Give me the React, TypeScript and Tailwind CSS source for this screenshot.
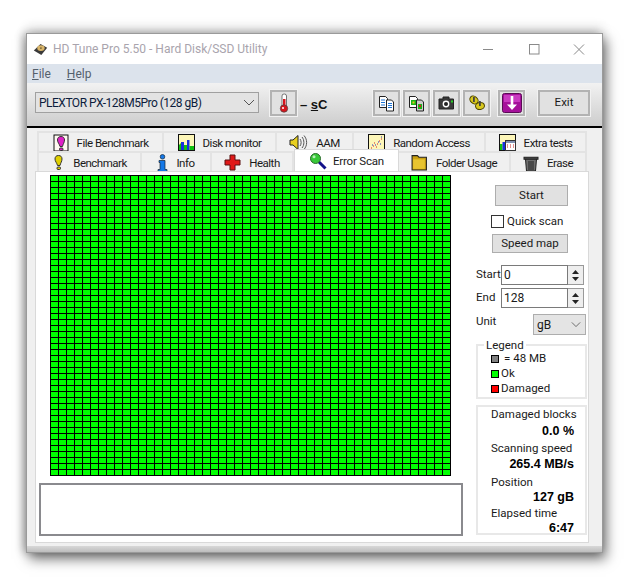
import type { ReactNode } from 'react';

const cells = Array.from({ length: 2500 });

const DiskIcon = () => (
  <svg width="15" height="13" viewBox="0 0 18 14" preserveAspectRatio="none" className="shrink-0">
    <path d="M1 8 9 1l8 4-7 8z" fill="#3a3a3a" />
    <ellipse cx="9.5" cy="5.5" rx="4.5" ry="3.2" fill="#d9b56a" />
    <circle cx="9.5" cy="5.5" r="1" fill="#6b5a30" />
  </svg>
);

const Thermometer = () => (
  <svg width="16" height="20" viewBox="0 0 16 20">
    <rect x="6" y="1" width="4.5" height="13" rx="2" fill="#fff" stroke="#555" strokeWidth="0.8" />
    <rect x="7" y="6" width="2.5" height="8" fill="#d8141c" />
    <circle cx="8" cy="15.5" r="3.7" fill="#d8141c" stroke="#444" strokeWidth="0.7" />
    <circle cx="7" cy="15" r="1" fill="#fff" />
  </svg>
);

const DocsIcon = ({ colored }: { colored?: boolean }) => (
  <svg width="17" height="17" viewBox="0 0 17 17">
    <path d="M1.5 1.5h6l2 2v9h-8z" fill="#fff" stroke="#222" />
    <path d="M8.5 5h5l2 2v9h-7z" fill={colored ? '#ccc' : '#fff'} stroke="#222" />
    {colored ? (
      <>
        <rect x="3" y="5" width="5" height="5" fill="#18b518" />
        <rect x="4.5" y="6.5" width="2" height="2" fill="#e8c81a" />
        <rect x="10" y="9" width="4" height="5" fill="#18b518" />
        <rect x="11" y="10" width="2" height="2" fill="#d81a1a" />
      </>
    ) : (
      <>
        <path d="M3 5h4M3 7.5h4M3 10h4" stroke="#1d74d6" />
        <path d="M10 8.5h4M10 10.5h4M10 12.5h4" stroke="#1d74d6" />
      </>
    )}
  </svg>
);

const CameraIcon = () => (
  <svg width="17" height="14" viewBox="0 0 17 14">
    <path d="M5 3V1h6v2h4.5v10H1V3z" fill="#3a3a3a" stroke="#222" />
    <circle cx="8" cy="8" r="3.4" fill="#fff" />
    <circle cx="8" cy="8" r="2" fill="#222" />
    <rect x="13" y="4.5" width="2" height="2" fill="#27d327" />
  </svg>
);

const CoinsIcon = () => (
  <svg width="18" height="18" viewBox="0 0 18 18">
    <ellipse cx="6" cy="6" rx="4.5" ry="3.5" transform="rotate(40 6 6)" fill="#d8c81e" stroke="#4a4200" />
    <ellipse cx="12" cy="12" rx="4.5" ry="3.5" transform="rotate(-10 12 12)" fill="#d8c81e" stroke="#4a4200" />
    <rect x="5" y="3" width="1.8" height="5" fill="#444" />
    <rect x="11" y="7" width="1.8" height="5" fill="#444" />
  </svg>
);

const DownIcon = () => (
  <svg width="20" height="20" viewBox="0 0 20 20">
    <rect x="0.5" y="0.5" width="19" height="19" rx="2" fill="#a5109a" stroke="#5a0a55" />
    <rect x="2" y="2" width="16" height="7" fill="#c93ac0" />
    <path d="M8.7 3h2.6v8.5H15L10 17l-5-5.500h3.700z" fill="#fff" />
  </svg>
);

const Bulb = ({ color, edge }: { color: string; edge: string }) => (
  <>
    <path d="M6.5 1.5c2.500 0 3.500 1.500 3.500 3.500 0 2.500-1.500 4-2 6.500H5.500C5 9 3 7.500 3 5c0-2 1-3.500 3.500-3.500z" fill={color} stroke={edge} />
    <rect x="5" y="13" width="3.5" height="2.5" rx="1" fill={color} stroke={edge} />
  </>
);

const tabIcons: Record<string, ReactNode> = {
  'File Benchmark': (
    <svg width="16" height="18" viewBox="0 0 16 18">
      <rect x="1" y="1" width="14" height="16" fill="#fff8f0" stroke="#111" />
      <g transform="translate(1.5 1)">
        <Bulb color="#e020c8" edge="#333" />
      </g>
    </svg>
  ),
  'Disk monitor': (
    <svg width="17" height="17" viewBox="0 0 17 17">
      <rect x="0.5" y="0.5" width="16" height="16" fill="#fdf6b8" stroke="#111" />
      <path d="M1 16v-5l2-2v7z" fill="#10c010" />
      <path d="M3 16V8h3v8z" fill="#1530e0" />
      <path d="M6 16v-5h3v5z" fill="#10c010" />
      <path d="M9 16V6h2.500v10z" fill="#1530e0" />
      <path d="M11.5 16v-4H16v4z" fill="#10c010" />
    </svg>
  ),
  AAM: (
    <svg width="19" height="17" viewBox="0 0 19 17">
      <path d="M1 6h3l5-4.500v14L4 11H1z" fill="#e8d020" stroke="#222" />
      <path d="M11 5c1.500 2 1.500 5 0 7M13 3c2.500 3 2.500 8 0 11M15 1.500c3.500 4 3.500 10 0 14" fill="none" stroke="#555" />
    </svg>
  ),
  'Random Access': (
    <svg width="17" height="17" viewBox="0 0 17 17">
      <rect x="0.5" y="0.5" width="16" height="16" fill="#fdf6b8" stroke="#111" />
      <path d="M3 14h1M5 12h1M8 13h1M6 9h1M9 10h1M11 7h1M13 5h1" stroke="#d02020" />
      <path d="M4 11h1M7 11h1M10 8h1M12 10h1M13 3h1" stroke="#2030c0" />
    </svg>
  ),
  'Extra tests': (
    <svg width="17" height="17" viewBox="0 0 17 17">
      <rect x="0.5" y="0.5" width="16" height="16" fill="#fdf6b8" stroke="#111" />
      <path d="M1 16v-6h2.500v6z" fill="#10c010" />
      <path d="M3.5 16V8H6v8z" fill="#1530e0" />
      <rect x="6.5" y="6.5" width="10" height="10" fill="#fff" stroke="#333" />
      <rect x="7" y="7" width="9" height="2" fill="#8090b0" />
      <path d="M8 11h1M11 11h1M14 11h1M8 13h1M11 13h1M14 13h1" stroke="#c02020" />
    </svg>
  ),
  Benchmark: (
    <svg width="13" height="17" viewBox="0 0 13 17">
      <Bulb color="#e0d000" edge="#333" />
    </svg>
  ),
  Info: (
    <svg width="11" height="18" viewBox="0 0 11 18">
      <circle cx="5.5" cy="2.8" r="2.3" fill="#1478e8" stroke="#123" strokeWidth="0.7" />
      <path d="M2 6.5h6v9h2v2H1v-2h2v-7H2z" fill="#1478e8" stroke="#123" strokeWidth="0.7" />
    </svg>
  ),
  Health: (
    <svg width="17" height="17" viewBox="0 0 17 17">
      <path d="M6 1h5v5h5v5h-5v5H6v-5H1V6h5z" fill="#e01818" stroke="#5a1010" />
    </svg>
  ),
  'Error Scan': (
    <svg width="18" height="18" viewBox="0 0 18 18">
      <path d="m10 10 6.5 6.500" stroke="#12128a" strokeWidth="3" />
      <circle cx="6.5" cy="6.5" r="5" fill="#38c838" stroke="#2a6a2a" />
      <circle cx="5" cy="4.8" r="1.5" fill="#b8f0b8" />
    </svg>
  ),
  'Folder Usage': (
    <svg width="17" height="17" viewBox="0 0 16 16">
      <path d="M1 3V1.5h5L7.5 3H14.500v12H1z" fill="#caa010" stroke="#222" />
      <path d="M2 5h11v9H2z" fill="#e8c430" />
    </svg>
  ),
  Erase: (
    <svg width="16" height="18" viewBox="0 0 16 17" preserveAspectRatio="none">
      <path d="M1 3h14v2H1z" fill="#555" stroke="#222" />
      <path d="M2.5 5h11l-1 11h-9z" fill="#6e6e6e" stroke="#222" />
      <path d="M6 6.5V15M8 6.5V15M10 6.5V15" stroke="#222" />
    </svg>
  ),
};

function Tab({ name, width, active }: { name: string; width: string; active?: boolean }) {
  return (
    <div
      className={
        active
          ? `${width} relative z-10 -mt-[2px] flex h-[22px] items-start justify-center gap-[6px] border border-b-0 border-[#d9d9d9] bg-white pt-[2px] text-[11.5px] tracking-[-0.2px]`
          : `${width} flex h-[20px] items-center justify-center gap-[8px] border-t-2 border-r-2 border-[#e3e3e3] pt-px text-[11.5px] tracking-[-0.5px] first:border-l-2`
      }
    >
      {tabIcons[name]}
      <span className="translate-y-px">{name}</span>
    </div>
  );
}

function ToolButton({ children, width = 'w-[27px]' }: { children: ReactNode; width?: string }) {
  return (
    <div className={`${width} flex h-[26px] items-center justify-center border-2 border-[#b3b3b3] bg-[#e1e1e1] outline outline-1 outline-[#f2f2f2]`}>
      {children}
    </div>
  );
}

function Spin({ value, label }: { value: string; label: string }) {
  return (
    <div className="flex items-center">
      <span className="w-[25px]">{label}</span>
      <div className="flex h-[20px] w-[67px] items-center border border-[#7a7a7a] bg-white px-[2px] text-[12px]">{value}</div>
      <div className="flex h-[20px] w-[16px] flex-col items-center justify-center gap-[3px] border border-l-0 border-[#999] bg-[#eee]">
        <svg width="7" height="4" viewBox="0 0 7 4"><path d="M3.5 0 7 4H0z" fill="#222" /></svg>
        <svg width="7" height="4" viewBox="0 0 7 4"><path d="M3.5 4 7 0H0z" fill="#222" /></svg>
      </div>
    </div>
  );
}

function Stat({ label, value, top, valueTop }: { label: string; value: string; top: string; valueTop: string }) {
  return (
    <div className={`flex flex-col ${top}`}>
      <span className="h-[15px] leading-[15px]">{label}</span>
      <span className={`h-[16px] pr-[11px] text-right font-['Liberation_Sans',sans-serif] text-[12.5px] leading-[16px] font-bold text-black ${valueTop}`}>{value}</span>
    </div>
  );
}

function Chevron({ size = 12 }: { size?: number }) {
  return (
    <svg width={size} height="7" viewBox="0 0 12 7" fill="none" stroke="#555">
      <path d="m1 1 5 5 5-5" />
    </svg>
  );
}

export default function App() {
  return (
    <div className="min-h-[579px] bg-white pt-[33px] pl-[26px] font-['Roboto',sans-serif] text-[11.5px] text-[#1a1a1a]">
      <div className="flex h-[520px] w-[577px] flex-col border border-[#9a9a9a] bg-[#f0f0f0] shadow-[3px_6px_12px_rgba(0,0,0,0.55),0_-6px_10px_rgba(0,0,0,0.12),-4px_0_8px_rgba(0,0,0,0.2)]">
        <div className="flex h-[30px] shrink-0 items-center bg-white pl-[6px]">
          <DiskIcon />
          <span className="ml-[5px] text-[12px] text-[#a9a4ad]">HD Tune Pro 5.50 - Hard Disk/SSD Utility</span>
          <div className="ml-auto flex items-center pr-[11px]">
            <svg width="120" height="14" viewBox="0 0 120 14" fill="none" stroke="#8a8a8a">
              <path d="M12 7.5h10" />
              <rect x="58.5" y="2.5" width="9.5" height="9.5" />
              <path d="m103 2.500 10 10m0-10-10 10" />
            </svg>
          </div>
        </div>
        <div className="flex h-[19px] shrink-0 items-center gap-[16px] bg-[#dce3ec] pl-[5px] text-[12px] text-[#55606c]">
          <span><span className="underline">F</span>ile</span>
          <span><span className="underline">H</span>elp</span>
        </div>
        <div className="flex h-[45px] shrink-0 items-start border-b-2 border-black bg-linear-to-b from-[#f2f2f2] to-[#cdcdcd] pt-[7px] pl-[8px]">
          <div className="mt-[2px] flex h-[21px] w-[224px] items-center justify-between border border-[#a0a0a0] bg-[#e3e3e3] px-[3px] text-[12px] tracking-[-0.5px] text-[#0c1c3c]">
            <span>PLEXTOR PX-128M5Pro (128 gB)</span>
            <Chevron />
          </div>
          <div className="ml-[11px]"><ToolButton><Thermometer /></ToolButton></div>
          <div className="ml-[3px] flex w-[73px] items-center pt-[5px] font-['Liberation_Sans',sans-serif] text-[13px] font-bold text-[#111]">
            <span>–&nbsp;</span><span className="underline">s</span><span>C</span>
          </div>
          <div className="flex gap-[3px]">
            <ToolButton><DocsIcon /></ToolButton>
            <ToolButton><DocsIcon colored /></ToolButton>
            <ToolButton><CameraIcon /></ToolButton>
            <ToolButton><CoinsIcon /></ToolButton>
          </div>
          <div className="ml-[8px]"><ToolButton><DownIcon /></ToolButton></div>
          <div className="ml-[13px]"><ToolButton width="w-[52px]">Exit</ToolButton></div>
        </div>
        <div className="flex min-h-0 flex-1 flex-col pt-[3px] pl-[8px]">
          <div className="flex pl-[2px]">
            <Tab name="File Benchmark" width="w-[127px]" />
            <Tab name="Disk monitor" width="w-[113px]" />
            <Tab name="AAM" width="w-[77px]" />
            <Tab name="Random Access" width="w-[132px]" />
            <Tab name="Extra tests" width="w-[101px]" />
          </div>
          <div className="flex pl-[2px]">
            <Tab name="Benchmark" width="w-[105px]" />
            <Tab name="Info" width="w-[70px]" />
            <Tab name="Health" width="w-[82px]" />
            <Tab name="Error Scan" width="w-[105px]" active />
            <Tab name="Folder Usage" width="w-[112px]" />
            <Tab name="Erase" width="w-[76px]" />
          </div>
          <div className="flex h-[372px] w-[554px] border border-[#d9d9d9] bg-white pt-[3px] pl-[3px]">
            <div className="flex w-[424px] flex-col">
              <div className="ml-[11px] grid h-[301px] w-[401px] grid-cols-[repeat(50,7px)] grid-rows-[repeat(50,5px)] gap-px bg-black p-px">
                {cells.map((_, i) => (
                  <div key={i} className="bg-[#00ff00]" />
                ))}
              </div>
              <div className="mt-[7px] h-[53px] w-[424px] border-2 border-[#8a8a8e] bg-white" />
            </div>
            <div className="ml-[13px] flex w-[111px] flex-col">
              <div className="mt-[10px] ml-[19px] flex h-[21px] w-[73px] items-center justify-center border border-[#adadad] bg-[#e1e1e1]">Start</div>
              <div className="mt-[9px] ml-[15px] flex h-[13px] items-center gap-[3px]">
                <div className="h-[13px] w-[13px] border border-[#333] bg-white" />
                <span>Quick scan</span>
              </div>
              <div className="mt-[6px] ml-[16px] flex h-[19px] w-[76px] items-center justify-center border border-[#adadad] bg-[#e1e1e1]">Speed map</div>
              <div className="mt-[12px] flex flex-col gap-[3px]">
                <Spin label="Start" value="0" />
                <Spin label="End" value="128" />
              </div>
              <div className="mt-[5px] flex items-center justify-between">
                <span className="pb-[6px]">Unit</span>
                <div className="mr-[1px] flex h-[21px] w-[53px] items-center justify-between border border-[#adadad] bg-[#e4e4e4] pr-[4px] pl-[3px] text-[12px]">
                  <span>gB</span>
                  <Chevron size={10} />
                </div>
              </div>
              <fieldset className="mt-[2px] h-[61px] border-2 border-[#e8e8e8] pl-[6px] leading-[15px]">
                <legend className="px-[2px] leading-[14px]">Legend</legend>
                <div className="-mt-px ml-[7px] flex items-center gap-[2px]"><div className="h-[8px] w-[8px] border border-black bg-[#808080]" /><span className="pl-[3px]">= 48 MB</span></div>
                <div className="ml-[7px] flex items-center gap-[2px]"><div className="h-[8px] w-[8px] border border-black bg-[#00ff00]" />Ok</div>
                <div className="ml-[7px] flex items-center gap-[2px]"><div className="h-[8px] w-[8px] border border-black bg-[#ff0000]" />Damaged</div>
              </fieldset>
              <div className="mt-[6px] flex h-[130px] flex-col border-2 border-[#e8e8e8] pl-[13px]">
                <Stat label="Damaged blocks" value="0.0 %" top="" valueTop="mt-px" />
                <Stat label="Scanning speed" value="265.4 MB/s" top="mt-[2px]" valueTop="" />
                <Stat label="Position" value="127 gB" top="mt-[3px]" valueTop="-mt-px" />
                <Stat label="Elapsed time" value="6:47" top="mt-px" valueTop="-mt-px" />
              </div>
            </div>
          </div>
        </div>
        <div className="h-[6px] shrink-0 bg-linear-to-b from-[#d8d8d8] to-[#bdbdbd]" />
      </div>
    </div>
  );
}
